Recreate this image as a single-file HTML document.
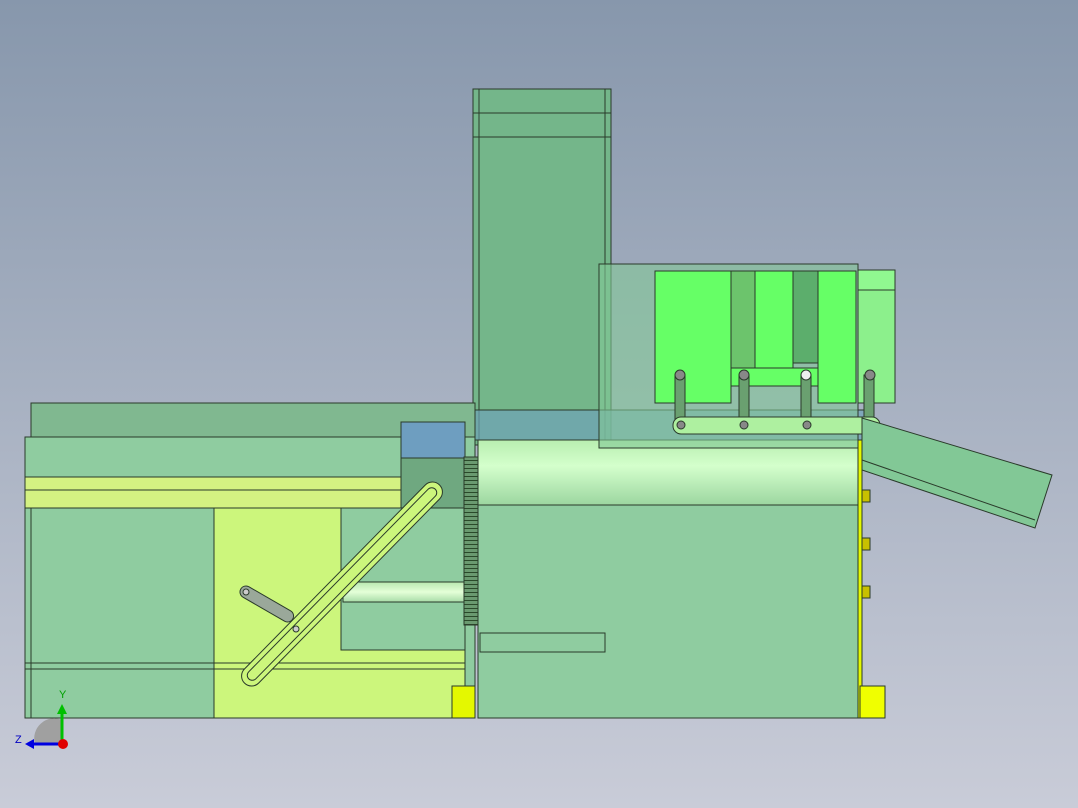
<!DOCTYPE html>
<html><head><meta charset="utf-8"><style>
html,body{margin:0;padding:0;width:1078px;height:808px;overflow:hidden}
</style></head><body>
<svg width="1078" height="808" viewBox="0 0 1078 808" xmlns="http://www.w3.org/2000/svg" font-family="Liberation Sans, sans-serif">
<defs>
<linearGradient id="bg" x1="0" y1="0" x2="0" y2="1">
<stop offset="0" stop-color="#8797ac"/><stop offset="1" stop-color="#c9ccd8"/></linearGradient>
<linearGradient id="cyl" x1="0" y1="0" x2="0" y2="1">
<stop offset="0" stop-color="#b8eeb0"/><stop offset="0.4" stop-color="#d4ffcc"/><stop offset="1" stop-color="#9cd6a0"/></linearGradient>
<linearGradient id="bar" x1="0" y1="0" x2="0" y2="1">
<stop offset="0" stop-color="#b8e8b0"/><stop offset="0.5" stop-color="#e4ffd8"/><stop offset="1" stop-color="#a8dca8"/></linearGradient>
<pattern id="gear" width="14" height="4" patternUnits="userSpaceOnUse"><rect width="14" height="4" fill="#6a9a70"/><line x1="0" y1="0.5" x2="14" y2="0.5" stroke="#2a4a2a" stroke-width="1"/></pattern>
</defs>
<rect width="1078" height="808" fill="url(#bg)"/>
<g stroke="#2a3a2a" stroke-width="1">
<rect x="473" y="89" width="138" height="356" fill="#74b68a"/>
<line x1="473" y1="113" x2="611" y2="113"/><line x1="473" y1="137" x2="611" y2="137"/>
<line x1="479" y1="89" x2="479" y2="445"/><line x1="605" y1="89" x2="605" y2="445"/>
<rect x="31" y="403" width="444" height="40" fill="#80b890"/>
<rect x="25" y="437" width="450" height="281" fill="#8fcca0"/>
<rect x="25" y="477" width="440" height="31" fill="#d4f282"/>
<line x1="25" y1="490" x2="465" y2="490"/>
<rect x="214" y="508" width="251" height="210" fill="#ccf67c"/>
<rect x="31" y="508" width="183" height="210" fill="#8fcca0"/>
<rect x="341" y="508" width="124" height="142" fill="#8fcca0"/>
<rect x="343" y="582" width="122" height="20" fill="url(#bar)"/>
<line x1="25" y1="663" x2="465" y2="663"/><line x1="25" y1="669" x2="465" y2="669"/>
<rect x="452" y="686" width="23" height="32" fill="#e4f800"/>
<rect x="401" y="422" width="64" height="36" fill="#6e9ec0"/>
<rect x="401" y="458" width="64" height="50" fill="#6fa880"/>
<g transform="rotate(-45.5 342 584)"><rect x="203" y="574" width="278" height="20" rx="10" fill="#ccf67c"/><rect x="209" y="579" width="266" height="10" rx="5" fill="none"/></g>
<g transform="rotate(30 246 592)"><rect x="240" y="586" width="60" height="12" rx="6" fill="#9aa89a"/></g>
<circle cx="246" cy="592" r="3" fill="#ccc"/><circle cx="296" cy="629" r="3" fill="#ccc"/>
<rect x="464" y="457" width="14" height="168" fill="url(#gear)"/>
<rect x="478" y="440" width="380" height="278" fill="#8fcca0"/>
<rect x="478" y="440" width="380" height="65" fill="url(#cyl)"/>
<rect x="480" y="633" width="125" height="19" fill="none"/>
<rect x="858" y="440" width="4" height="278" fill="#e4f800"/>
<rect x="862" y="490" width="8" height="12" fill="#c8c000"/>
<rect x="862" y="538" width="8" height="12" fill="#c8c000"/>
<rect x="862" y="586" width="8" height="12" fill="#c8c000"/>
<rect x="860" y="686" width="25" height="32" fill="#f0ff00"/>
<rect x="475" y="410" width="390" height="30" fill="#6fa2b8" fill-opacity="0.7"/>
<rect x="599" y="264" width="259" height="184" fill="#82c896" fill-opacity="0.6"/>
<rect x="858" y="270" width="37" height="133" fill="#90f890"/>
<rect x="858" y="290" width="37" height="113" fill="#8cf08c"/>
<rect x="655" y="271" width="76" height="132" fill="#66ff66"/>
<rect x="731" y="271" width="24" height="100" fill="#6cc46c"/>
<rect x="755" y="271" width="38" height="97" fill="#66ff66"/>
<rect x="793" y="271" width="25" height="92" fill="#5cae6c"/>
<rect x="818" y="271" width="38" height="132" fill="#66ff66"/>
<rect x="731" y="368" width="87" height="18" fill="#66ff66"/>
<rect x="675" y="375" width="10" height="50" fill="#6aa070"/>
<rect x="739" y="375" width="10" height="50" fill="#6aa070"/>
<rect x="801" y="375" width="10" height="50" fill="#6aa070"/>
<rect x="864" y="375" width="10" height="50" fill="#6aa070"/>
<rect x="673" y="417" width="207" height="17" rx="8" fill="#aef0a0"/>
<circle cx="680" cy="375" r="5" fill="#888"/><circle cx="744" cy="375" r="5" fill="#888"/>
<circle cx="806" cy="375" r="5" fill="#eee"/><circle cx="870" cy="375" r="5" fill="#888"/>
<circle cx="681" cy="425" r="4" fill="#888"/><circle cx="744" cy="425" r="4" fill="#888"/>
<circle cx="807" cy="425" r="4" fill="#888"/><circle cx="870" cy="425" r="4" fill="#888"/>
<polygon points="862,418 1052,475 1035,528 862,470" fill="#82c896"/>
<line x1="862" y1="460" x2="1035" y2="520"/>
</g>
<path d="M35 744 A20 20 0 0 1 62 720 L62 744 Z" fill="#a0a0a0"/>
<line x1="62" y1="744" x2="62" y2="712" stroke="#00c000" stroke-width="3"/>
<polygon points="57,714 67,714 62,704" fill="#00c000"/>
<line x1="62" y1="744" x2="32" y2="744" stroke="#0000e0" stroke-width="3"/>
<polygon points="34,739 34,749 25,744" fill="#0000e0"/>
<circle cx="63" cy="744" r="5" fill="#e00000"/>
<text x="59" y="698" font-size="11" fill="#00a000">Y</text>
<text x="15" y="743" font-size="11" fill="#0000c0">Z</text>
</svg>
</body></html>
